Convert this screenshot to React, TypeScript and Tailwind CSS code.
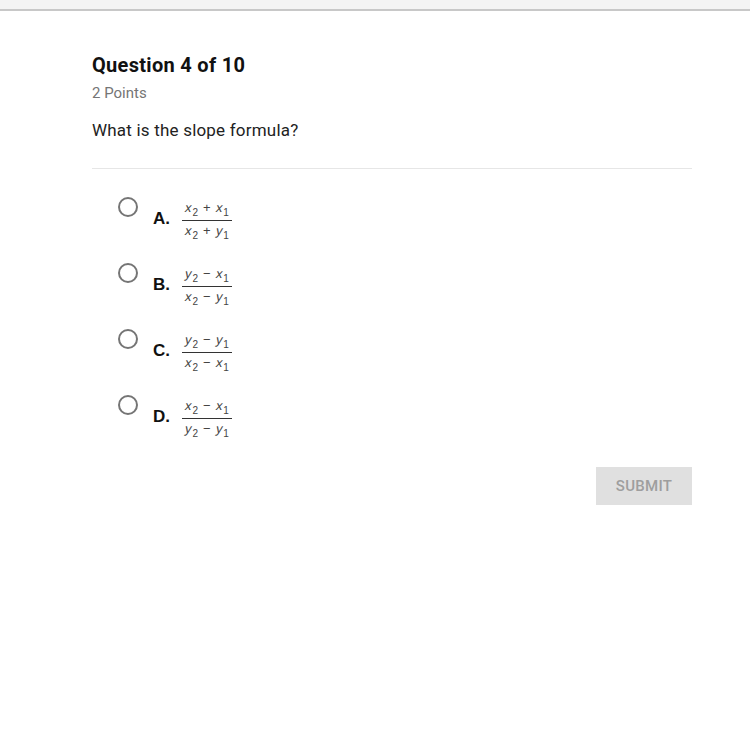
import React from "react";

const V = ({ v, s }: { v: string; s: string }) => (
  <span className="inline-flex items-baseline">
    <span className="inline-block -skew-x-12">{v}</span>
    <span className="text-[10px] relative top-[4px] ml-[1px]">{s}</span>
  </span>
);

type Term = [string, string];
const Frac = ({ n, d, op }: { n: [Term, Term]; d: [Term, Term]; op: string }) => (
  <div className="inline-flex flex-col items-stretch text-[13px] text-[#444] leading-[20px]" style={{ fontFamily: '"Liberation Sans", Arial, sans-serif' }}>
    <div className="px-[3px] pb-[1px] border-b border-[#333] flex justify-center gap-[5px]">
      <V v={n[0][0]} s={n[0][1]} />
      <span>{op}</span>
      <V v={n[1][0]} s={n[1][1]} />
    </div>
    <div className="px-[3px] flex justify-center gap-[5px]">
      <V v={d[0][0]} s={d[0][1]} />
      <span>{op}</span>
      <V v={d[1][0]} s={d[1][1]} />
    </div>
  </div>
);

const options: { l: string; n: [Term, Term]; d: [Term, Term]; op: string }[] = [
  { l: "A.", n: [["x", "2"], ["x", "1"]], d: [["x", "2"], ["y", "1"]], op: "+" },
  { l: "B.", n: [["y", "2"], ["x", "1"]], d: [["x", "2"], ["y", "1"]], op: "−" },
  { l: "C.", n: [["y", "2"], ["y", "1"]], d: [["x", "2"], ["x", "1"]], op: "−" },
  { l: "D.", n: [["x", "2"], ["x", "1"]], d: [["y", "2"], ["y", "1"]], op: "−" },
];

export default function App() {
  return (
    <div className="w-[750px] h-[750px] bg-white" style={{ fontFamily: "Roboto, Arial, sans-serif" }}>
      <div className="h-[9px] bg-[#f4f4f4]" />
      <div className="h-[2px] bg-[#c8c8c8]" />
      <div className="ml-[92px] w-[600px]">
        <div className="mt-[41px] text-[20px] leading-[26px] font-bold text-[#111] tracking-[0.3px]">Question 4 of 10</div>
        <div className="mt-[5px] text-[15px] leading-[20px] text-[#757575]">2 Points</div>
        <div className="mt-[15px] text-[17px] leading-[24px] text-[#222] tracking-[0.2px]">What is the slope formula?</div>
        <div className="mt-[26px] h-px bg-[#e6e6e6]" />
        <div className="mt-[28px] ml-[26px] flex flex-col">
          {options.map((o) => (
            <div key={o.l} className="h-[66px] flex items-start">
              <div className="w-[20px] h-[20px] rounded-full border-2 border-[#757575]" />
              <div className="ml-[15px] mt-[1px] flex items-center">
                <span className="w-[29px] -mt-[2px] text-[17px] font-bold text-[#111]" style={{ fontFamily: '"Liberation Sans", Arial, sans-serif' }}>{o.l}</span>
                <Frac n={o.n} d={o.d} op={o.op} />
              </div>
            </div>
          ))}
        </div>
        <div className="mt-[6px] flex justify-end">
          <div className="w-[96px] h-[38px] bg-[#e0e0e0] flex items-center justify-center text-[15px] font-medium text-[#9e9e9e] tracking-[0.3px]">SUBMIT</div>
        </div>
      </div>
    </div>
  );
}
